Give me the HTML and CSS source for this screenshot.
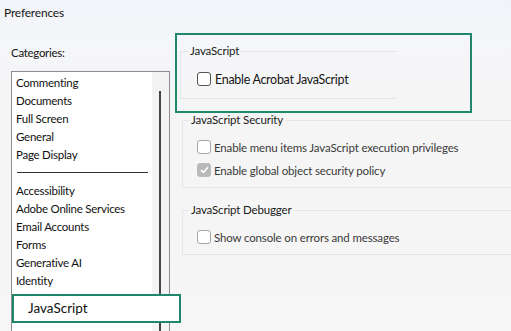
FILE: index.html
```html
<!DOCTYPE html>
<html>
<head>
<meta charset="utf-8">
<link rel="stylesheet" href="styles.css">
</head>
<body>
<div class="title">Preferences</div>
<div class="main">
  <div class="left">
    <div class="cat-label">Categories:</div>
    <div class="listbox">
      <div class="items">
        <div class="item">Commenting</div>
        <div class="item">Documents</div>
        <div class="item">Full Screen</div>
        <div class="item">General</div>
        <div class="item">Page Display</div>
        <div class="sep"></div>
        <div class="item">Accessibility</div>
        <div class="item">Adobe Online Services</div>
        <div class="item">Email Accounts</div>
        <div class="item">Forms</div>
        <div class="item">Generative AI</div>
        <div class="item">Identity</div>
        <div class="item selected">JavaScript</div>
      </div>
      <div class="scrollbar"><div class="thumb"></div></div>
    </div>
  </div>
  <div class="right">
    <div class="highlight">
      <fieldset class="group g1">
        <legend>JavaScript</legend>
        <label class="row big"><span class="cb cb-dark"></span>Enable Acrobat JavaScript</label>
      </fieldset>
    </div>
    <fieldset class="group g2">
      <legend>JavaScript Security</legend>
      <label class="row dim"><span class="cb"></span>Enable menu items JavaScript execution privileges</label>
      <label class="row dim second"><span class="cb checked"><svg width="9" height="8" viewBox="0 0 9 8"><path d="M1 4.2 L3.4 6.4 L8 1.3" fill="none" stroke="#fff" stroke-width="1.6"/></svg></span>Enable global object security policy</label>
    </fieldset>
    <fieldset class="group g3">
      <legend>JavaScript Debugger</legend>
      <label class="row dim"><span class="cb"></span>Show console on errors and messages</label>
    </fieldset>
  </div>
</div>
</body>
</html>
```
FILE: styles.css
```css
html, body {
  margin: 0;
  height: 100%;
  overflow: hidden;
}
body {
  font-family: Lato, "Noto Sans", sans-serif;
  color: #151515;
  background: linear-gradient(#f2f4fa 0px, #f5f6f9 40px, #f5f5f5 120px, #f6f6f6 100%);
  width: 511px;
  height: 331px;
}
.title {
  height: 26px;
  line-height: 26px;
  padding-left: 4px;
  font-size: 12px;
  letter-spacing: -0.2px;
}
.main {
  display: flex;
  height: 305px;
}
.left {
  width: 159px;
  padding-left: 11px;
  display: flex;
  flex-direction: column;
  flex: none;
}
.cat-label {
  margin-top: 19px;
  height: 16px;
  line-height: 16px;
  font-size: 11.5px;
  letter-spacing: -0.3px;
  margin-bottom: 10px;
}
.listbox {
  flex: 1;
  border: 1px solid #8d8d8d;
  border-bottom: none;
  background: #fff;
  display: flex;
}
.items {
  flex: 1;
  padding-top: 2px;
  padding-left: 4px;
  font-size: 11.5px;
  letter-spacing: -0.25px;
  color: #111;
}
.item {
  height: 18px;
  line-height: 18px;
  white-space: nowrap;
}
.sep {
  height: 18px;
  margin-left: 1px;
  width: 131px;
  background: linear-gradient(#333, #333) no-repeat 0 8px / 100% 1px;
}
.item.selected {
  position: relative;
  z-index: 2;
  margin-top: 4px;
  margin-left: -4px;
  margin-right: -29px;
  height: 29px;
  box-sizing: border-box;
  border: 2px solid #21876c;
  background: #fff;
  line-height: 25px;
  padding-left: 14px;
  font-size: 13.5px;
  letter-spacing: 0;
}
.scrollbar {
  width: 17px;
  flex: none;
  background: #f3f3f3;
  display: flex;
  justify-content: center;
}
.thumb {
  width: 2px;
  margin-top: 19px;
  margin-left: -1px;
  background: #474747;
}
.right {
  flex: 1;
  padding-left: 5px;
  padding-top: 7px;
  min-width: 0;
}
.highlight {
  width: 297px;
  height: 80px;
  box-sizing: border-box;
  border: 2px solid #21876c;
  padding: 9px 3px 0 3px;
}
fieldset.group {
  margin: 0;
  padding: 0;
  border: 1px solid #e6e6e6;
  min-inline-size: 0;
  font-size: 11.5px;
  letter-spacing: -0.15px;
}
fieldset.group legend {
  padding: 0 2px;
  height: 14px;
  line-height: 14px;
  color: #1a1a1a;
}
fieldset.g1 {
  padding-top: 12px;
  padding-bottom: 10px;
  border-right-color: transparent;
  margin-right: 70px;
}
fieldset.g1 legend { margin-left: 7px; }
fieldset.g1 .row { margin-left: 16px; }
fieldset.g2, fieldset.g3 {
  margin-left: 7px;
  padding-top: 11px;
  padding-bottom: 8px;
  border-right: none;
}
fieldset.g2 legend, fieldset.g3 legend { margin-left: 6px; }
fieldset.g2 .row, fieldset.g3 .row { margin-left: 14px; }
fieldset.g3 { margin-top: 15px; }
.row {
  display: flex;
  align-items: center;
  height: 18px;
  white-space: nowrap;
}
.row.second { margin-top: 5px; }
.row.big {
  font-size: 12.5px;
  letter-spacing: -0.3px;
  color: #151515;
}
.row.dim { color: #3a3a3a; }
.cb {
  width: 12px;
  height: 12px;
  border: 1px solid #a6a6a6;
  border-radius: 3px;
  background: #fff;
  margin-right: 3px;
  flex: none;
  display: flex;
  align-items: center;
  justify-content: center;
}
.cb-dark {
  width: 12px;
  height: 12px;
  border: 1.5px solid #555;
  margin-right: 4px;
}
.cb.checked {
  background: #b9b9b9;
  border-color: #b9b9b9;
}
```
